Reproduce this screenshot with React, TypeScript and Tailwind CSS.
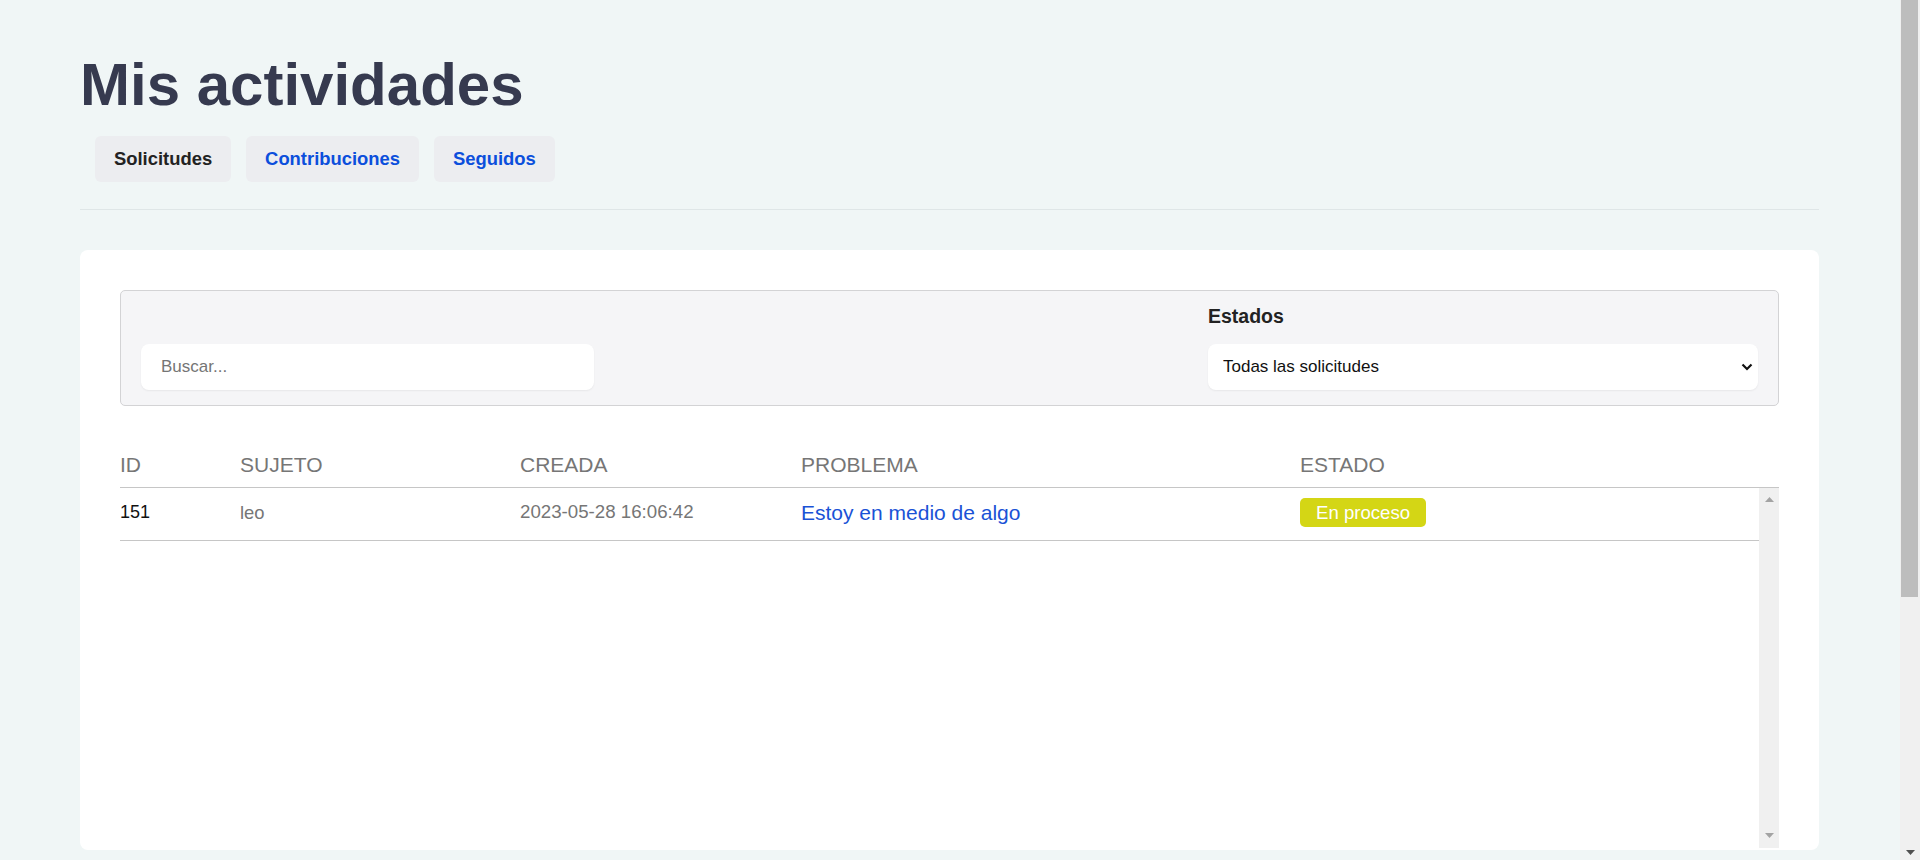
import React from 'react';

interface Solicitud {
  id: number;
  sujeto: string;
  creada: string;
  problema: string;
  estado: string;
}

const solicitudes: Solicitud[] = [
  { id: 151, sujeto: 'leo', creada: '2023-05-28 16:06:42', problema: 'Estoy en medio de algo', estado: 'En proceso' },
];

const tabs = [
  { label: 'Solicitudes', active: true },
  { label: 'Contribuciones', active: false },
  { label: 'Seguidos', active: false },
];

const cols = 'grid grid-cols-[120px_280px_281px_499px_1fr]';

const Arrow: React.FC<{ up?: boolean; color: string }> = ({ up, color }) => (
  <svg width="9" height="5" viewBox="0 0 9 5">
    <polygon points={up ? '0,5 4.5,0 9,5' : '0,0 9,0 4.5,5'} fill={color} />
  </svg>
);

const App: React.FC = () => {
  return (
    <div className="flex h-[860px] overflow-hidden bg-[#f0f6f6] font-['Liberation_Sans',Arial,sans-serif]">
      <main className="flex-1">
        <div className="ml-[80px] w-[1739px] pt-[55px]">
          <h1 className="text-[60px] leading-none font-bold text-[#363a4f]">Mis actividades</h1>

          <nav className="mt-[21px] ml-[15px] flex gap-[15px]">
            {tabs.map((tab) => (
              <button
                key={tab.label}
                className={`h-[46px] px-[19px] rounded-md bg-[#ecedf0] text-[18.4px] font-bold
                  ${tab.active ? 'text-[#222222]' : 'text-[#0b4fdc]'}`}
              >
                {tab.label}
              </button>
            ))}
          </nav>

          <div className="mt-[27px] border-b border-[#dfe6e7]" />

          <section className="mt-10 h-[600px] rounded-lg bg-white px-10 pt-10">
            {/* filtros */}
            <div className="flex items-end justify-between rounded-[5px] border border-[#d3d3d5] bg-[#f5f5f7] px-5 pt-[13px] pb-[15px]">
              <input
                type="text"
                placeholder="Buscar..."
                className="h-[46px] w-[453px] rounded-lg bg-white px-5 text-[17px] text-[#222] placeholder:text-[#757575] shadow-[0_1px_2px_rgba(0,0,0,0.06)] outline-none"
              />
              <div className="w-[550px]">
                <label className="block text-[19.5px] leading-6 font-bold text-[#222]">Estados</label>
                <div className="relative mt-4 h-[46px]">
                  <select className="h-full w-full appearance-none rounded-lg bg-white pl-[15px] pr-10 text-[17px] text-[#111] shadow-[0_1px_2px_rgba(0,0,0,0.06)] outline-none">
                    <option>Todas las solicitudes</option>
                    <option>En proceso</option>
                    <option>Cerradas</option>
                  </select>
                  <svg
                    className="pointer-events-none absolute right-[5px] top-1/2 -translate-y-1/2"
                    width="12"
                    height="8"
                    viewBox="0 0 12 8"
                    fill="none"
                  >
                    <path d="M1.5 1.5 L6 6 L10.5 1.5" stroke="#111" strokeWidth="2.2" />
                  </svg>
                </div>
              </div>
            </div>

            {/* tabla */}
            <div className={`${cols} mt-[47px] border-b border-[#c6c6c6] pb-[10px] text-[21px] leading-6 text-[#767676]`}>
              <div>ID</div>
              <div>SUJETO</div>
              <div>CREADA</div>
              <div>PROBLEMA</div>
              <div>ESTADO</div>
            </div>
            <div className="flex h-[360px]">
              <div className="flex-1 overflow-hidden">
                {solicitudes.map((s) => (
                  <div key={s.id} className={`${cols} h-[53px] items-center border-b border-[#c6c6c6] pb-[3px]`}>
                    <div className="text-[18px] text-[#111]">{s.id}</div>
                    <div className="text-[18.4px] text-[#767676]">{s.sujeto}</div>
                    <div className="text-[18.7px] text-[#767676]">{s.creada}</div>
                    <a href="#" className="justify-self-start text-[21px] text-[#1a52d6]">{s.problema}</a>
                    <div>
                      <span className="inline-flex h-[29px] items-center rounded-[5px] bg-[#d4d615] px-4 text-[18.6px] text-white">
                        {s.estado}
                      </span>
                    </div>
                  </div>
                ))}
              </div>
              {/* barra de desplazamiento de la tabla */}
              <div className="flex w-[20px] flex-col items-center justify-between bg-[#f0f0f0] pt-[9px] pb-[10px]">
                <Arrow up color="#a3a3a3" />
                <Arrow color="#a3a3a3" />
              </div>
            </div>
          </section>
        </div>
      </main>

      {/* barra de desplazamiento de la página */}
      <aside className="flex h-[860px] w-[20px] flex-col bg-[#f0f0f0]">
        <div className="ml-[1px] mr-[2px] h-[597px] bg-[#bdbdbd]" />
        <div className="mt-auto flex justify-center pb-[5px]">
          <Arrow color="#505050" />
        </div>
      </aside>
    </div>
  );
};

export default App;
